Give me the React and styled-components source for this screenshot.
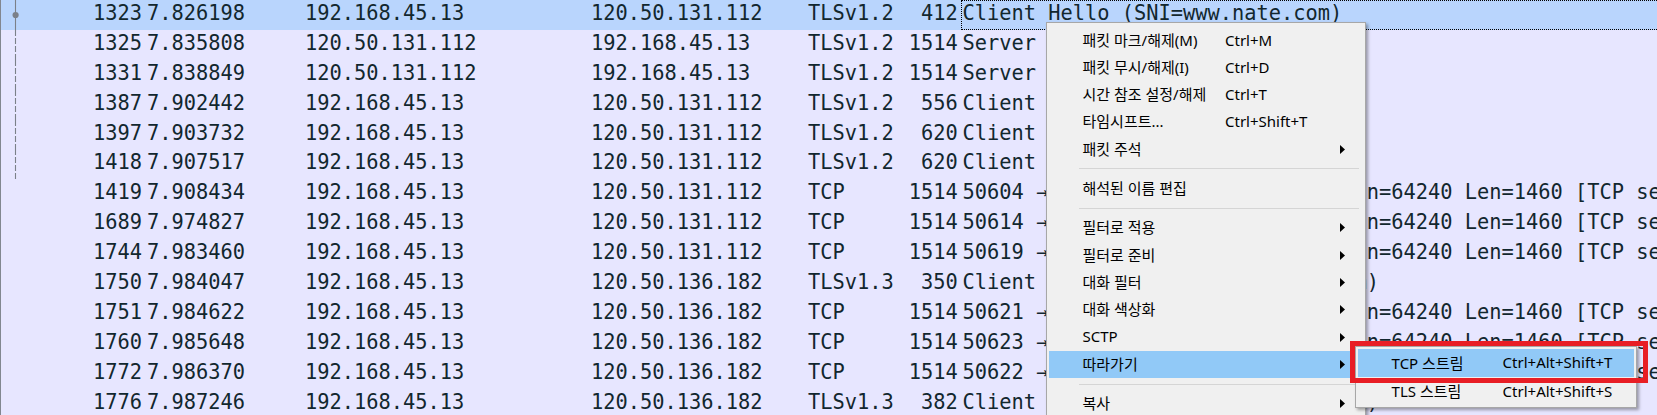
import React from "react";
import styled, { createGlobalStyle } from "styled-components";

const GlobalStyle = createGlobalStyle`
  html, body {
    margin: 0;
    padding: 0;
    width: 1657px;
    height: 415px;
    overflow: hidden;
    background: #e7e6ff;
  }
`;

const tcpInfo = (port) =>
  `${port} → 443 [ACK] Seq=1 Ack=51 Win=64240 Len=1460 [TCP segment of a reassembled PDU]`;

const packets = [
  [1323, "7.826198", "192.168.45.13", "120.50.131.112", "TLSv1.2", 412, "Client Hello (SNI=www.nate.com)", "first"],
  [1325, "7.835808", "120.50.131.112", "192.168.45.13", "TLSv1.2", 1514, "Server Hello", "mid"],
  [1331, "7.838849", "120.50.131.112", "192.168.45.13", "TLSv1.2", 1514, "Server Hello Done", "mid"],
  [1387, "7.902442", "192.168.45.13", "120.50.131.112", "TLSv1.2", 556, "Client Key Exchange", "mid"],
  [1397, "7.903732", "192.168.45.13", "120.50.131.112", "TLSv1.2", 620, "Client Hello", "mid"],
  [1418, "7.907517", "192.168.45.13", "120.50.131.112", "TLSv1.2", 620, "Client Hello", "mid"],
  [1419, "7.908434", "192.168.45.13", "120.50.131.112", "TCP", 1514, tcpInfo(50604)],
  [1689, "7.974827", "192.168.45.13", "120.50.131.112", "TCP", 1514, tcpInfo(50614)],
  [1744, "7.983460", "192.168.45.13", "120.50.131.112", "TCP", 1514, tcpInfo(50619)],
  [1750, "7.984047", "192.168.45.13", "120.50.136.182", "TLSv1.3", 350, "Client Hello (SNI=images.nate.com)"],
  [1751, "7.984622", "192.168.45.13", "120.50.136.182", "TCP", 1514, tcpInfo(50621)],
  [1760, "7.985648", "192.168.45.13", "120.50.136.182", "TCP", 1514, tcpInfo(50623)],
  [1772, "7.986370", "192.168.45.13", "120.50.136.182", "TCP", 1514, tcpInfo(50622)],
  [1776, "7.987246", "192.168.45.13", "120.50.136.182", "TLSv1.3", 382, "Client Hello (SNI=images.nate.com)"],
];

const menuItems = [
  { label: "패킷 마크/해제(M)", shortcut: "Ctrl+M" },
  { label: "패킷 무시/해제(I)", shortcut: "Ctrl+D" },
  { label: "시간 참조 설정/해제", shortcut: "Ctrl+T" },
  { label: "타임시프트...", shortcut: "Ctrl+Shift+T" },
  { label: "패킷 주석", sub: true },
  { sep: true },
  { label: "해석된 이름 편집" },
  { sep: true },
  { label: "필터로 적용", sub: true },
  { label: "필터로 준비", sub: true },
  { label: "대화 필터", sub: true },
  { label: "대화 색상화", sub: true },
  { label: "SCTP", sub: true },
  { label: "따라가기", sub: true, active: true },
  { sep: true },
  { label: "복사", sub: true },
];

const followItems = [
  { label: "TCP 스트림", shortcut: "Ctrl+Alt+Shift+T", active: true },
  { label: "TLS 스트림", shortcut: "Ctrl+Alt+Shift+S" },
];

function Related({ kind }) {
  return (
    <RelSvg width="30" height="30" viewBox="0 0 30 30">
      {kind === "first" && (
        <>
          <line x1="14.5" y1="0" x2="14.5" y2="30" stroke="#7b8089" strokeWidth="1.1" />
          <circle cx="14.6" cy="15" r="3.1" fill="#7b8089" />
        </>
      )}
      {kind === "mid" && (
        <line x1="14.5" y1="0" x2="14.5" y2="30" stroke="#7b8089" strokeWidth="1.1" strokeDasharray="6 2" />
      )}
    </RelSvg>
  );
}

function Arrow() {
  return (
    <svg width="5" height="9" viewBox="0 0 5 9">
      <polygon points="0,0 5,4.5 0,9" fill="#000" />
    </svg>
  );
}

export default function App() {
  return (
    <>
      <GlobalStyle />
      <Page>
        <PacketList>
          {packets.map(([no, time, src, dst, proto, len, info, rel], i) => (
            <Row key={no} $selected={i === 0}>
              <NoCell>
                <Related kind={rel} />
                <span>{no}</span>
              </NoCell>
              <Cell>{time}</Cell>
              <Cell>{src}</Cell>
              <Cell>{dst}</Cell>
              <ProtoCell>{proto}</ProtoCell>
              <LenCell>{len}</LenCell>
              <InfoCell $focus={i === 0}>{info}</InfoCell>
            </Row>
          ))}
        </PacketList>

        <Menu>
          {menuItems.map((item, i) =>
            item.sep ? (
              <Separator key={i} />
            ) : (
              <MenuItem key={i} $active={item.active}>
                <Label>{item.label}</Label>
                <Shortcut>{item.shortcut}</Shortcut>
                <SubMark>{item.sub && <Arrow />}</SubMark>
              </MenuItem>
            )
          )}
        </Menu>

        <SubMenu>
          {followItems.map((item) => (
            <SubItem key={item.label} $active={item.active}>
              <SubLabel>{item.label}</SubLabel>
              <Shortcut>{item.shortcut}</Shortcut>
            </SubItem>
          ))}
        </SubMenu>

        <Callout />
      </Page>
    </>
  );
}

const Page = styled.div`
  position: relative;
  width: 1657px;
  height: 415px;
  overflow: hidden;
  background: #e7e6ff;
`;

const PacketList = styled.div`
  display: flex;
  flex-direction: column;
  border-left: 1px solid #828790;
  height: 100%;
  font-family: "DejaVu Sans Mono", monospace;
  font-size: 20.35px;
  color: #12272e;
`;

const Row = styled.div`
  display: grid;
  grid-template-columns: 142px 158px 286px 216px 96px 62px 1fr;
  height: 29.9px;
  line-height: 27.5px;
  flex-shrink: 0;
  white-space: nowrap;
  background: ${(p) => (p.$selected ? "#b9d5fd" : "#e7e6ff")};
`;

const Cell = styled.div`
  padding-left: 4px;
`;

const NoCell = styled.div`
  display: flex;
  justify-content: space-between;
  padding-right: 1px;
`;

const RelSvg = styled.svg`
  display: block;
  flex-shrink: 0;
  height: 100%;
`;

const ProtoCell = styled(Cell)`
  padding-left: 5px;
`;

const LenCell = styled.div`
  text-align: right;
  padding-right: 3.3px;
`;

const InfoCell = styled.div`
  box-sizing: border-box;
  padding-left: ${(p) => (p.$focus ? "0.5px" : "1.5px")};
  border: ${(p) => (p.$focus ? "1px dotted #000" : "none")};
  border-right: none;
  height: ${(p) => (p.$focus ? "29.9px" : "auto")};
  line-height: ${(p) => (p.$focus ? "25.5px" : "27.5px")};
`;

const Menu = styled.div`
  position: absolute;
  left: 1046px;
  top: 22px;
  width: 320px;
  box-sizing: border-box;
  padding: 3.5px 2px 8px;
  background: #f0f0f0;
  border: 1px solid #a7a7a7;
  box-shadow: 2px 2px 3px rgba(0, 0, 0, 0.35);
  font-family: "Noto Sans", "Noto Sans CJK KR", sans-serif;
  font-size: 15px;
  color: #000;
`;

const MenuItem = styled.div`
  display: grid;
  grid-template-columns: 142.5px 115px 1fr;
  align-items: center;
  height: 27.3px;
  padding-left: 33.5px;
  white-space: nowrap;
  background: ${(p) => (p.$active ? "#91c9f7" : "transparent")};
`;

const Label = styled.span`
  line-height: 27.3px;
`;

const Shortcut = styled.span`
  line-height: 27.3px;
`;

const SubMark = styled.span`
  display: flex;
  align-items: center;
`;

const Separator = styled.div`
  height: 12px;
  display: flex;
  align-items: center;
  margin: 0 4px 0 30px;
  &::after {
    content: "";
    flex: 1;
    height: 1px;
    background: #d5d5d5;
  }
`;

const SubMenu = styled.div`
  position: absolute;
  left: 1355px;
  top: 346px;
  width: 282px;
  box-sizing: border-box;
  padding: 1.5px 2px;
  background: #f0f0f0;
  border: 1px solid #a7a7a7;
  box-shadow: 2px 2px 3px rgba(0, 0, 0, 0.35);
  font-family: "Noto Sans", "Noto Sans CJK KR", sans-serif;
  font-size: 15px;
  color: #000;
`;

const SubItem = styled.div`
  display: grid;
  grid-template-columns: 111px 1fr;
  align-items: center;
  height: 28.5px;
  padding-left: 33.6px;
  white-space: nowrap;
  background: ${(p) => (p.$active ? "#91c9f7" : "transparent")};
`;

const SubLabel = styled.span`
  line-height: 28.5px;
`;

const Callout = styled.div`
  position: absolute;
  left: 1350px;
  top: 341px;
  width: 298px;
  height: 42px;
  box-sizing: border-box;
  border: 5px solid #e81e25;
  pointer-events: none;
`;
